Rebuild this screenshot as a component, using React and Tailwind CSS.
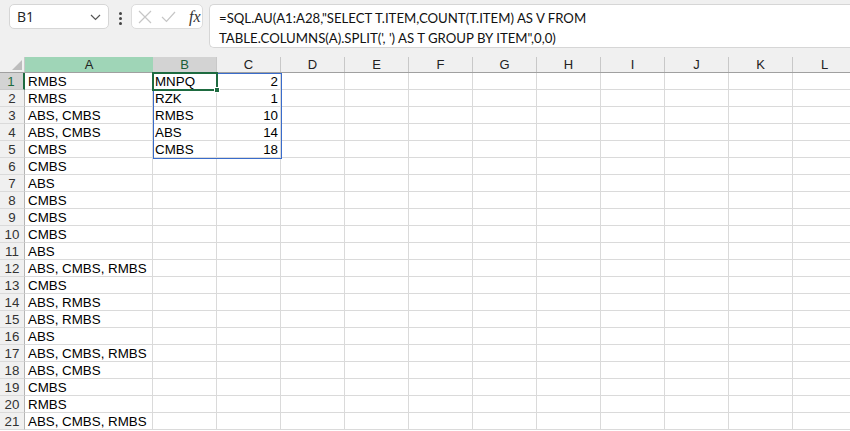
import React from "react";

const colA = [
  "RMBS", "RMBS", "ABS, CMBS", "ABS, CMBS", "CMBS", "CMBS", "ABS", "CMBS", "CMBS", "CMBS",
  "ABS", "ABS, CMBS, RMBS", "CMBS", "ABS, RMBS", "ABS, RMBS", "ABS", "ABS, CMBS, RMBS",
  "ABS, CMBS", "CMBS", "RMBS", "ABS, CMBS, RMBS",
];

const result = [
  ["MNPQ", 2],
  ["RZK", 1],
  ["RMBS", 10],
  ["ABS", 14],
  ["CMBS", 18],
];

const extraCols = ["D", "E", "F", "G", "H", "I", "J", "K", "L"];

const cellFont = { fontFamily: '"Liberation Sans", Arial, sans-serif' };

const Toolbar = () => (
  <div className="flex h-[57px] items-start bg-[#f0f0f0] pt-[4px]">
    {/* name box */}
    <div className="ml-[9px] flex h-[25px] w-[100px] shrink-0 items-center justify-between rounded-[5px] border border-[#d6d6d6] bg-white pl-[7px] pr-[7px]">
      <span className="text-[14px] text-[#222]" style={{ fontFamily: '"Open Sans", sans-serif' }}>B1</span>
      <svg width="11" height="7" viewBox="0 0 11 7" className="mt-[1px]">
        <path d="M1 1 L5.5 5.5 L10 1" fill="none" stroke="#555" strokeWidth="1.2" />
      </svg>
    </div>
    {/* dots */}
    <div className="flex w-[22px] shrink-0 flex-col items-center gap-[2px] pt-[8px]">
      <span className="h-[3px] w-[3px] rounded-full bg-[#444]" />
      <span className="h-[3px] w-[3px] rounded-full bg-[#444]" />
      <span className="h-[3px] w-[3px] rounded-full bg-[#444]" />
    </div>
    {/* fx box */}
    <div className="flex h-[25px] w-[72px] shrink-0 items-center rounded-[5px] border border-[#dcdcdc] bg-white pl-[6px]">
      <svg width="14" height="14" viewBox="0 0 14 14">
        <path d="M1 1 L13 13 M13 1 L1 13" stroke="#c6c6c6" strokeWidth="1.2" />
      </svg>
      <svg width="15" height="12" viewBox="0 0 15 12" className="ml-[9px]">
        <path d="M1 6 L5.5 10.5 L14 1" fill="none" stroke="#c6c6c6" strokeWidth="1.2" />
      </svg>
      <span
        className="ml-[13px] text-[16px] italic leading-none text-[#333]"
        style={{ fontFamily: '"Liberation Serif", serif' }}
      >
        fx
      </span>
    </div>
    {/* formula box */}
    <div
      className="ml-[6px] h-[44px] flex-1 rounded-l-[5px] border border-r-0 border-[#d6d6d6] bg-white pl-[9px] pt-[3px] text-[13.2px] leading-[20px] text-[#111]"
      style={{ fontFamily: 'Lato, sans-serif' }}
    >
      <div>=SQL.AU(A1:A28,"SELECT T.ITEM,COUNT(T.ITEM) AS V FROM</div>
      <div>TABLE.COLUMNS(A).SPLIT(', ') AS T GROUP BY ITEM",0,0)</div>
    </div>
  </div>
);

const HeaderRow = () => (
  <div className="flex h-[16px] border-b border-[#a0a0a0] bg-[#f0f0f0] text-[13px] leading-[15px] text-[#222]" style={cellFont}>
    <div className="relative w-[25px] shrink-0 border-r border-[#c8c8c8]">
      <svg width="10" height="10" viewBox="0 0 10 10" className="absolute bottom-[2px] right-[2px]">
        <path d="M10 0 L10 10 L0 10 Z" fill="#bdbdbd" />
      </svg>
    </div>
    <div className="w-[128px] shrink-0 bg-[#9fd5b7] text-center">A</div>
    <div className="w-[64px] shrink-0 border-r border-[#c8c8c8] bg-[#d3d3d3] text-center text-[#1b5e37]">B</div>
    <div className="w-[64px] shrink-0 border-r border-[#c8c8c8] text-center">C</div>
    {extraCols.map((c) => (
      <div key={c} className="w-[64px] shrink-0 border-r border-[#c8c8c8] text-center">
        {c}
      </div>
    ))}
  </div>
);

const Row = ({ i }) => {
  const r = result[i];
  const selected = i === 0;
  return (
    <div className="flex h-[17px] text-[13.35px] leading-[17px] text-black" style={cellFont}>
      <div
        className={
          selected
            ? "w-[25px] shrink-0 border-b border-r-2 border-b-[#c8c8c8] border-r-[#1e6b40] bg-[#d3d3d3] pr-[1px] text-center text-[#1e6b40]"
            : "w-[25px] shrink-0 border-b border-r border-b-[#dadada] border-r-[#b5b5b5] bg-[#f0f0f0] text-center text-[#333]"
        }
      >
        {i + 1}
      </div>
      <div className="w-[128px] shrink-0 whitespace-nowrap border-b border-r border-[#dadada] pl-[3px]">
        {colA[i]}
      </div>
      <div className="w-[64px] shrink-0 border-b border-r border-[#dadada] pl-[2px]">{r ? r[0] : ""}</div>
      <div className="w-[64px] shrink-0 border-b border-r border-[#dadada] pr-[2px] text-right">{r ? r[1] : ""}</div>
      {extraCols.map((c) => (
        <div key={c} className="w-[64px] shrink-0 border-b border-r border-[#dadada]" />
      ))}
    </div>
  );
};

export default function App() {
  return (
    <div className="h-[431px] w-[850px] overflow-hidden bg-white">
      <Toolbar />
      <div className="relative">
        <HeaderRow />
        {colA.map((_, i) => (
          <Row key={i} i={i} />
        ))}
        {/* spill range outline B1:C5 */}
        <div className="pointer-events-none absolute left-[153px] top-[16px] h-[86px] w-[129px] border border-[#3a6ccb]" />
        {/* active cell B1 */}
        <div className="pointer-events-none absolute left-[152px] top-[15px] h-[19px] w-[66px] border-2 border-[#1e6b40]" />
        <div className="pointer-events-none absolute left-[214px] top-[30px] h-[6px] w-[6px] border border-white bg-[#1e6b40]" />
      </div>
    </div>
  );
}
